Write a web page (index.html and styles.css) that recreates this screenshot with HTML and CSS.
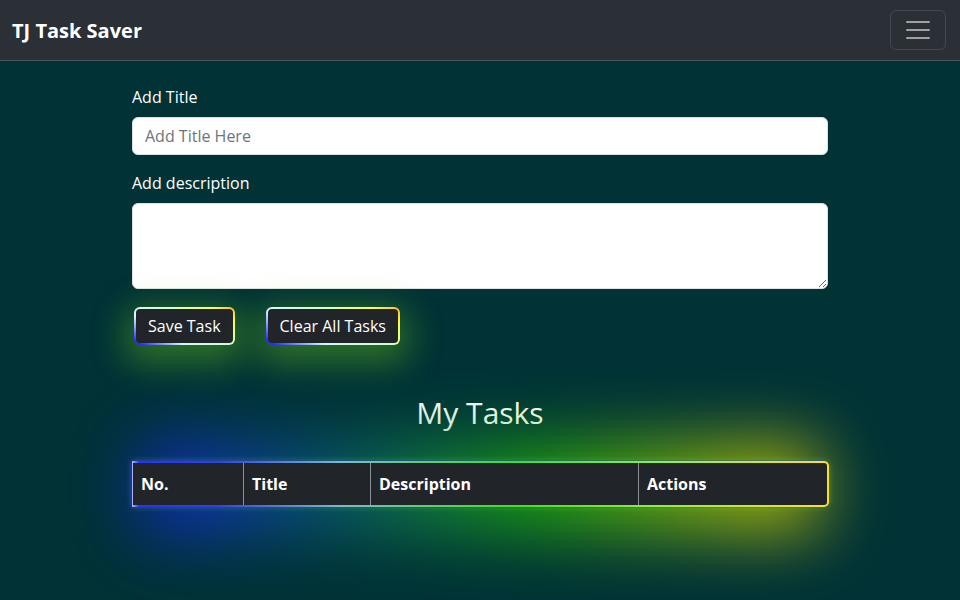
FILE: index.html
```html
<!DOCTYPE html>
<html lang="en">
<head>
<meta charset="utf-8">
<title>TJ Task Saver</title>
<link rel="stylesheet" href="styles.css">
</head>
<body>
<nav class="navbar">
  <span class="brand">TJ Task Saver</span>
  <button class="toggler" aria-label="Toggle navigation">
    <svg width="30" height="30" viewBox="0 0 30 30"><path d="M4 7h22M4 15h22M4 23h22" stroke="rgba(255,255,255,0.55)" stroke-width="2" stroke-linecap="round"/></svg>
  </button>
</nav>
<main class="container">
  <div class="field">
    <label class="label" for="title">Add Title</label>
    <input id="title" class="control" type="text" placeholder="Add Title Here">
  </div>
  <div class="field">
    <label class="label" for="desc">Add description</label>
    <textarea id="desc" class="control area" rows="3"></textarea>
  </div>
  <div class="actions">
    <button class="glow-btn">Save Task</button>
    <button class="glow-btn">Clear All Tasks</button>
  </div>
  <h2 class="heading">My Tasks</h2>
  <div class="table-wrap">
    <table class="tasks">
      <thead>
        <tr>
          <th class="c1">No.</th>
          <th class="c2">Title</th>
          <th class="c3">Description</th>
          <th class="c4">Actions</th>
        </tr>
      </thead>
    </table>
  </div>
</main>
</body>
</html>
```
FILE: styles.css
```css
* { box-sizing: border-box; }
html, body { margin: 0; padding: 0; }
body {
  background: #003236;
  font-family: "Open Sans", "Noto Sans", sans-serif;
  color: #fff;
  height: 600px;
  overflow: hidden;
}
.navbar {
  height: 61px;
  background: #2b2f36;
  border-bottom: 1px solid #4a545a;
  display: flex;
  align-items: center;
  justify-content: space-between;
  padding: 0 14px 0 12px;
}
.brand {
  font-size: 20px;
  font-weight: 700;
  color: #fff;
}
.toggler {
  width: 56px;
  height: 40px;
  background: transparent;
  border: 1px solid rgba(255,255,255,0.12);
  border-radius: 6px;
  display: flex;
  align-items: center;
  justify-content: center;
  padding: 0;
}
.container {
  width: 696px;
  margin: 0 auto;
  padding-top: 24px;
}
.field { margin-bottom: 16px; }
.label {
  display: block;
  font-size: 16px;
  line-height: 24px;
  margin-bottom: 8px;
  color: #fff;
}
.control {
  display: block;
  width: 100%;
  height: 38px;
  border: 1px solid #dee2e6;
  border-radius: 6px;
  padding: 6px 12px;
  font-family: inherit;
  font-size: 16px;
  color: #212529;
  background: #fff;
}
.control::placeholder { color: #6c757d; }
.area { height: 86px; resize: vertical; }
.actions {
  display: flex;
  gap: 31px;
  padding-left: 2px;
  margin-top: 18px;
}
.glow-btn {
  height: 38px;
  padding: 0 12px;
  font-family: inherit;
  font-size: 16px;
  color: #fff;
  background: #212529;
  border: 2px solid transparent;
  border-radius: 6px;
  background-image: linear-gradient(#212529, #212529), linear-gradient(30deg, #2430ff 5%, #d8f4ff 30%, #d0ffd0 60%, #ffff40 85%, #ffb830);
  background-origin: border-box;
  background-clip: padding-box, border-box;
  box-shadow: 0 10px 34px 8px rgba(110, 200, 20, 0.42);
}
.heading {
  text-align: center;
  font-weight: 400;
  font-size: 30px;
  line-height: 36px;
  margin: 50px 0 30px;
}
.table-wrap {
  position: relative;
  width: 697px;
}
.table-wrap::before {
  content: "";
  position: absolute;
  left: 10px; right: 10px; top: -18px; bottom: -26px;
  background: linear-gradient(90deg, #1a20ff 0%, #0a5a8a 25%, #22c400 58%, #b8d400 85%, #f0e000 100%);
  filter: blur(34px);
  opacity: 0.75;
  z-index: 0;
}
.tasks {
  position: relative;
  z-index: 1;
  width: 100%;
  border-collapse: separate;
  border-spacing: 0;
  border: 2px solid transparent;
  border-left-width: 1px;
  border-radius: 0 5px 5px 0;
  background-image: linear-gradient(#212529, #212529), linear-gradient(90deg, #b8b8ff 0%, #2a30ff 1%, #3040e0 12%, #80b8c8 30%, #40e020 55%, #90f030 75%, #ffe020 100%);
  background-origin: border-box;
  background-clip: padding-box, border-box;
  box-shadow: -1px 0 2px #1a20ff, 0 0 6px rgba(120, 255, 60, 0.35);
}
.tasks th {
  text-align: left;
  font-weight: 700;
  font-size: 16px;
  line-height: 24px;
  padding: 9px 8px;
  color: #fff;
  border-left: 1px solid #8a9196;
}
.tasks th:first-child { border-left: none; }
.c1 { width: 110px; }
.c2 { width: 127px; }
.c3 { width: 268px; }
.c4 { width: auto; }
```
